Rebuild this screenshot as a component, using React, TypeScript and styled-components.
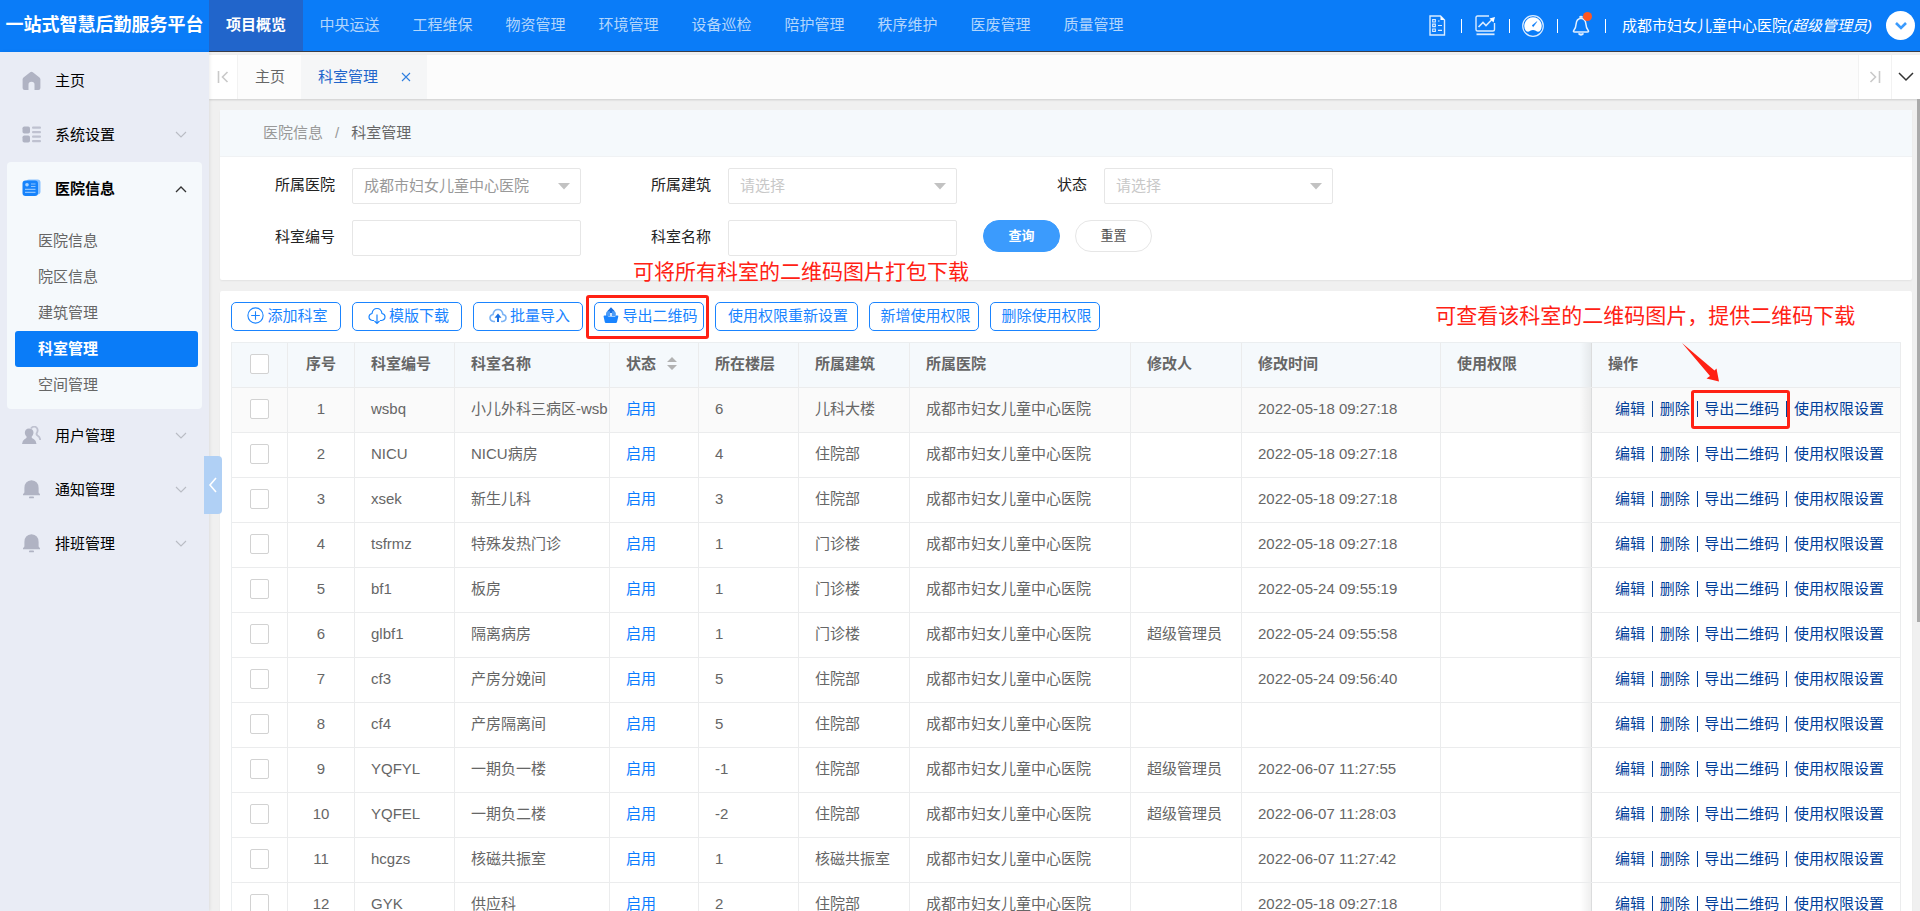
import React from 'react';
import styled, { createGlobalStyle, css } from 'styled-components';

const GlobalStyle = createGlobalStyle`
  *, *::before, *::after { box-sizing: border-box; }
  body {
    margin: 0;
    font: 15px/20px "Liberation Sans", "Noto Sans CJK SC", sans-serif;
    color: #666;
    background: #f0f0f0;
  }
  button, input, select { font: inherit; color: inherit; }
  a { color: inherit; text-decoration: none; }
  svg { display: block; flex: none; }
`;

const blue = '#0a7cf8';
const red = '#ff2114';

const Page = styled.div`
  height: 100vh;
  min-height: 600px;
  display: flex;
  flex-direction: column;
  overflow: hidden;
`;

/* ---------- top bar ---------- */

const TopBar = styled.header`
  flex: none;
  display: flex;
  height: 52px;
  background: ${blue};
  color: #fff;
`;

const Brand = styled.h1`
  flex: none;
  width: 209px;
  margin: 0;
  font-size: 18px;
  line-height: 50px;
  text-align: center;
  white-space: nowrap;
`;

const TopRest = styled.div`
  flex: 1;
  min-width: 0;
  display: flex;
  justify-content: space-between;
  border-bottom: 1px solid #393d49;
`;

const MainNav = styled.nav`
  display: flex;
`;

const NavLink = styled.a<{ $active?: boolean }>`
  width: 93px;
  line-height: 49px;
  text-align: center;
  white-space: nowrap;
  color: rgba(255, 255, 255, 0.7);
  ${p => p.$active && css`
    width: 94px;
    background: #2165cb;
    color: #fff;
    font-weight: 700;
  `}
`;

const Tools = styled.div`
  display: flex;
  align-items: center;
  padding-right: 5px;
`;

const ToolButton = styled.button`
  position: relative;
  display: flex;
  justify-content: center;
  width: 47px;
  padding: 0;
  border: 0;
  background: none;
`;

const ToolSeparator = styled.i`
  width: 1px;
  height: 14px;
  background: #fff;
`;

const AlertDot = styled.i`
  position: absolute;
  top: -3px;
  right: 13px;
  width: 9px;
  height: 9px;
  border-radius: 50%;
  background: #ff5722;
`;

const Account = styled.span`
  margin: 0 14px 0 16px;
  white-space: nowrap;
`;

const AccountMenu = styled.button`
  display: grid;
  place-items: center;
  width: 29px;
  height: 29px;
  padding: 0;
  border: 0;
  border-radius: 50%;
  background: #fff;
`;

/* ---------- side menu ---------- */

const Body = styled.div`
  flex: 1;
  min-height: 0;
  display: flex;
`;

const Side = styled.aside`
  position: relative;
  z-index: 2;
  flex: none;
  width: 209px;
  padding: 2px 7px 0;
  background: #e9ecf5;
  box-shadow: 1px 0 3px rgba(0, 0, 0, 0.08);
  color: #000;
`;

const MenuItem = styled.a<{ $bold?: boolean }>`
  display: flex;
  align-items: center;
  gap: 14px;
  height: 54px;
  padding: 0 15px;
  font-weight: ${p => (p.$bold ? 700 : 400)};
  & > span { flex: 1; }
`;

const MenuGroup = styled.div`
  padding-bottom: 6px;
  border-radius: 4px;
  background: #f5f9fc;
`;

const SubMenu = styled.div`
  padding: 7px 4px 0 8px;
`;

const SubItem = styled.a<{ $active?: boolean }>`
  display: block;
  padding-left: 23px;
  border-radius: 3px;
  line-height: 36px;
  color: #666;
  ${p => p.$active && css`
    background: ${blue};
    color: #fff;
    font-weight: 700;
  `}
`;

const CollapseHandle = styled.button`
  position: absolute;
  top: 404px;
  right: -13px;
  display: grid;
  place-items: center;
  width: 18px;
  height: 58px;
  padding: 0;
  border: 0;
  border-radius: 0 4px 4px 0;
  background: #b0d0f5;
`;

/* ---------- page tabs ---------- */

const Main = styled.main`
  position: relative;
  flex: 1;
  min-width: 0;
  display: flex;
  flex-direction: column;
`;

const TabBar = styled.div`
  flex: none;
  display: flex;
  height: 44px;
  margin-top: 3px;
  background: #fcfcfc;
  box-shadow: 0 1px 2px rgba(0, 0, 0, 0.15);
`;

const TabControl = styled.button<{ $width: number }>`
  display: grid;
  place-items: center;
  width: ${p => p.$width}px;
  padding: 0;
  border: 0;
  border-right: 1px solid #f2f2f2;
  background: #fff;
  & + & { border-right: 0; }
`;

const Tab = styled.a<{ $active?: boolean }>`
  display: flex;
  align-items: center;
  gap: 23px;
  padding: 0 16px 0 17px;
  ${p => p.$active && css`
    background: #f5f6f7;
    color: #2165cb;
  `}
`;

const TabSpace = styled.div`
  flex: 1;
  border-right: 1px solid #f2f2f2;
`;

/* ---------- cards ---------- */

const Content = styled.div`
  flex: 1;
  min-height: 0;
  overflow: hidden;
  display: flex;
  flex-direction: column;
  gap: 11px;
  padding: 11px 8px 0 11px;
`;

const ScrollThumb = styled.i`
  position: absolute;
  top: 47px;
  right: 0;
  width: 3px;
  height: 523px;
  background: #aaa;
`;

const Card = styled.section`
  flex: none;
  border-radius: 2px;
  background: #fff;
  box-shadow: 0 1px 2px rgba(0, 0, 0, 0.06);
`;

const Crumbs = styled.nav`
  display: flex;
  gap: 12px;
  height: 47px;
  padding-left: 43px;
  border-bottom: 1px solid #f0f2f4;
  background: #f5f9fc;
  line-height: 45px;
  color: #999;
  & > b { font-weight: 400; color: #666; }
`;

const FilterForm = styled.form`
  display: grid;
  grid-template-columns: repeat(3, 361px);
  gap: 16px 15px;
  padding: 11px 0 24px;
`;

const Field = styled.div`
  position: relative;
  display: flex;
  & > label {
    width: 132px;
    padding-right: 17px;
    text-align: right;
    line-height: 34px;
    color: #222;
  }
  & > svg {
    position: absolute;
    right: 11px;
    top: 15px;
    pointer-events: none;
  }
`;

const fieldBox = css`
  flex: 1;
  min-width: 0;
  height: 36px;
  padding: 0 11px;
  border: 1px solid #e6e6e6;
  border-radius: 2px;
  background: #fff;
  outline: 0;
`;

const TextInput = styled.input`${fieldBox}`;

const Select = styled.select<{ $empty?: boolean }>`
  ${fieldBox}
  appearance: none;
  opacity: 1;
  color: ${p => (p.$empty ? '#c8c8c8' : '#999')};
`;

const FormActions = styled.div`
  display: flex;
  gap: 15px;
  padding-left: 11px;
`;

const PillButton = styled.button<{ $primary?: boolean }>`
  width: 77px;
  height: 32px;
  padding: 0;
  border: 1px solid ${p => (p.$primary ? '#3b9bfd' : '#e6e6e6')};
  border-radius: 16px;
  background: ${p => (p.$primary ? '#3b9bfd' : '#fff')};
  color: ${p => (p.$primary ? '#fff' : '#555')};
  font-size: 13px;
  font-weight: ${p => (p.$primary ? 700 : 400)};
`;

const ListCard = styled(Card)`
  padding: 11px;
`;

const Toolbar = styled.div`
  display: flex;
  gap: 11px;
  margin-bottom: 11px;
`;

const ToolbarButton = styled.button<{ $wide?: boolean }>`
  position: relative;
  display: flex;
  align-items: center;
  justify-content: center;
  gap: 3px;
  width: ${p => (p.$wide ? 143 : 110)}px;
  height: 29px;
  padding: 0 0 2px 3px;
  border: 1px solid #1a84ff;
  border-radius: 5px;
  background: #fff;
  color: #1a84ff;
  white-space: nowrap;
`;

/* ---------- table ---------- */

const Table = styled.table`
  width: 100%;
  table-layout: fixed;
  border-collapse: separate;
  border-spacing: 0;
  border: solid #ebeef0;
  border-width: 1px 0 0 1px;

  th, td {
    height: 45px;
    padding: 0 16px 2px;
    border: solid #ebeced;
    border-width: 0 1px 1px 0;
    text-align: left;
    white-space: nowrap;
    overflow: hidden;
  }
  th { background: #f5f9fc; }
  .center { padding: 0 0 2px; text-align: center; }
  .fixed { position: relative; overflow: visible; }
  .fixed::before {
    content: '';
    position: absolute;
    top: 0;
    bottom: 0;
    left: -12px;
    width: 12px;
    background: linear-gradient(to left, rgba(0, 0, 0, 0.07), rgba(0, 0, 0, 0));
  }
`;

const Row = styled.tr<{ $hover?: boolean }>`
  background: ${p => (p.$hover ? '#fafafa' : '#fff')};
`;

const CheckBox = styled.input`
  appearance: none;
  display: block;
  width: 19px;
  height: 20px;
  margin: 0 auto;
  border: 1px solid #d2d2d2;
  border-radius: 2px;
  background: #fff;
`;

const SortLabel = styled.span`
  display: flex;
  align-items: center;
  gap: 11px;
`;

const StatusLink = styled.a`
  color: #0a7cff;
`;

const RowActions = styled.div`
  display: flex;
  align-items: center;
  gap: 7px;
  padding-left: 7px;
  color: #014099;
  & > a { position: relative; }
  & > i { width: 1px; height: 16px; background: #014099; }
`;

/* ---------- annotations ---------- */

const ButtonFrame = styled.span`
  position: absolute;
  inset: -8px -6px -9px -9px;
  border: 3px solid ${red};
  border-radius: 3px;
`;

const LinkFrame = styled.span`
  position: absolute;
  inset: -9px -11px -10px -13px;
  border: 3px solid ${red};
  border-radius: 3px;
`;

const ButtonNote = styled.span`
  position: absolute;
  left: 38px;
  bottom: 43px;
  font-size: 21px;
  line-height: 30px;
  color: ${red};
`;

const LinkNote = styled.span`
  position: absolute;
  right: -76px;
  bottom: 88px;
  font-size: 21px;
  line-height: 30px;
  color: ${red};
`;

const NoteArrow = styled.svg`
  position: absolute;
  left: -23px;
  bottom: 37px;
`;

/* ---------- icons ---------- */

const Chevron = ({ d, w, h, color, sw = 1 }: { d: string; w: number; h: number; color: string; sw?: number }) => (
  <svg width={w} height={h} viewBox={`0 0 ${w} ${h}`} fill="none" stroke={color} strokeWidth={sw}><path d={d} /></svg>
);

const MenuChevron = ({ open }: { open?: boolean }) =>
  open
    ? <Chevron w={12} h={8} d="M1 7L6 2L11 7" color="#333" sw={1.3} />
    : <Chevron w={12} h={8} d="M1 1L6 6L11 1" color="#b9bcc4" sw={1.1} />;

const HomeIcon = () => (
  <svg width="19" height="20" viewBox="0 0 19 20" fill="#b0b3c3">
    <path d="M8.2 1.2Q9.5.2 10.8 1.2L17.5 6.4Q18.4 7.200 18.400 8.300V17Q18.400 19 16.400 19H12.500V13.500Q12.500 10.800 9.500 10.800T6.500 13.500V19H2.600Q.6 19 .6 17V8.300Q.6 7.200 1.500 6.400Z" />
  </svg>
);

const GridIcon = () => (
  <svg width="19" height="18" viewBox="0 0 19 18" fill="#b0b3c3">
    <rect x="0.500" y="0.500" width="7.500" height="7" rx="1.800" />
    <rect x="0.500" y="9.500" width="7.500" height="7" rx="1.800" />
    <rect x="10" y="0.500" width="9" height="2.200" rx="1" opacity=".75" />
    <rect x="10" y="5" width="9" height="2.200" rx="1" opacity=".75" />
    <rect x="10" y="9.500" width="9" height="2.200" rx="1" opacity=".75" />
    <rect x="10" y="14" width="9" height="2.200" rx="1" opacity=".75" />
  </svg>
);

const HospitalIcon = () => (
  <svg width="19" height="20" viewBox="0 0 19 20">
    <rect x="4" y="0.500" width="14.500" height="15" rx="3" fill="#8cc3ff" />
    <rect x="0.500" y="1.500" width="15.500" height="15.500" rx="3" fill="#1783fb" />
    <circle cx="5" cy="5.800" r="1.800" fill="#a9d3ff" />
    <path d="M9 5H13.500M9 7.500H13.500M3 10.300H13.500M3 13.300H13.500" stroke="#8cc3ff" strokeWidth="1.200" />
  </svg>
);

const UsersIcon = () => (
  <svg width="19" height="20" viewBox="0 0 19 20">
    <path d="M9 2.500Q11 -.2 13.800 1Q16.800 3 15 6.500Q13.800 8.200 15.500 9.500Q18 11 18.200 14" fill="none" stroke="#b0b3c3" strokeWidth="1.800" opacity=".75" />
    <path d="M7 2.500Q11.500 2.500 11.500 7Q11.200 9.500 9.500 11Q9.800 12.500 12 13.300Q14.500 15 14.500 18H0Q0 15 2.500 13.300Q4.500 12.500 4.800 11Q3 9.500 2.800 7Q3 2.500 7 2.500Z" fill="#b0b3c3" />
  </svg>
);

const MenuBellIcon = () => (
  <svg width="19" height="20" viewBox="0 0 19 20" fill="#b0b3c3">
    <path d="M9.500 .3Q16.500.8 16.600 8V12.500L18 14.300V15.300H1V14.300L2.400 12.500V8Q2.500.8 9.500.3Z" />
    <rect x="7" y="16.500" width="5" height="1.800" rx=".9" />
  </svg>
);

const ChecklistIcon = () => (
  <svg width="17" height="21" viewBox="0 0 17 21" fill="none" stroke="#d9ebff" strokeWidth="1.400">
    <path d="M11.500 1H1V20H15.500V5Z" />
    <path d="M3.700 4.500H6.300V7H3.700ZM3.700 9.200H6.300V11.700H3.700ZM3.700 14H6.300V16.500H3.700ZM9 6H10.500M9 10.500H13M9 15.300H13" strokeWidth="1.200" />
    <path d="M11.500 1V5H15.500Z" fill="#fff" stroke="none" />
  </svg>
);

const ChartIcon = () => (
  <svg width="21" height="21" viewBox="0 0 21 21" fill="none" stroke="#d9ebff" strokeWidth="1.400">
    <path d="M14 1H2.500Q1 1 1 2.500V14.500Q1 16 2.500 16H18Q19.500 16 19.500 14.500V8" />
    <path d="M3.500 12L8 7.500L11 10.500L17 4.500" strokeWidth="1.600" />
    <path d="M14.500 3.500L20 2L18.500 7.500Z" fill="#fff" stroke="none" />
    <path d="M1.500 19.300H19.500" strokeWidth="1.800" />
  </svg>
);

const GaugeIcon = () => (
  <svg width="22" height="22" viewBox="0 0 22 22">
    <circle cx="11" cy="11" r="10.300" fill="none" stroke="#d9ebff" strokeWidth="1.200" />
    <path d="M11 2.200A8.700 8.700 0 0 1 18 16Q16 17.500 13.800 15.800Q11 14 8.200 15.800Q6 17.500 4 16A8.700 8.700 0 0 1 11 2.200Z" fill="#fff" />
    <path d="M15 6.500L10 10.600L11.300 11.800Z" fill="#0a7cf8" stroke="#0a7cf8" strokeWidth=".4" />
  </svg>
);

const BellIcon = () => (
  <svg width="18" height="21" viewBox="0 0 18 21" fill="none" stroke="#e3f0ff" strokeWidth="1.500">
    <path d="M9 3.200Q13.500 3.800 13.800 8.500Q14 13 16.500 16Q16.800 17 15.500 17H2.500Q1.200 17 1.500 16Q4 13 4.200 8.500Q4.500 3.800 9 3.200Z" />
    <path d="M7.500 2.500Q9 .5 10.500 2.500M6.500 18.500Q9 21.500 11.500 18.500" fill="#fff" />
  </svg>
);

const Caret = () => <svg width="12" height="7" viewBox="0 0 12 7" fill="#c2c2c2"><path d="M0 0H12L6 6.500Z" /></svg>;

const SortIcon = () => (
  <svg width="10" height="16" viewBox="0 0 10 16" fill="#b2b2b2"><path d="M0 6L5 1L10 6ZM0 9H10L5 14Z" /></svg>
);

const AddIcon = () => (
  <svg width="17" height="17" viewBox="0 0 17 17" fill="none" stroke="#1a84ff" strokeWidth="1.100">
    <circle cx="8.500" cy="8.500" r="7.600" /><path d="M8.500 4.200V12.800M4.200 8.500H12.800" />
  </svg>
);

const cloud = 'M6 13.500H4.500Q1 13 1 9.800Q1.200 7 4 6.500Q4.800 1.500 9 1.500T14 6.500Q17 7 17 9.800Q17 13 13.500 13.500H12';

const CloudDownIcon = () => (
  <svg width="18" height="18" viewBox="0 0 18 18" fill="none" stroke="#1a84ff" strokeWidth="1.200">
    <path d={cloud} /><path d="M9 7.500V16.500M6.500 14L9 16.500L11.500 14" />
  </svg>
);

const CloudUpIcon = () => (
  <svg width="18" height="16" viewBox="0 0 18 16" fill="none" stroke="#7bb3f5" strokeWidth="1.600">
    <path d={cloud} /><path d="M9 14V8" stroke="#1a6fe0" strokeWidth="2" /><path d="M5.500 9.800L9 5.500L12.500 9.800Z" fill="#1a6fe0" stroke="none" />
  </svg>
);

const ExportIcon = () => (
  <svg width="16" height="17" viewBox="0 0 16 17">
    <path d="M3 9.500V6.500Q3 3.500 8 3.200Q12.800 3.500 12.800 6.500V9.500Z" fill="#4d9cf7" />
    <path d="M8 .3L11.800 4.200H9V9H7V4.200H4.200Z" fill="#1a6fe0" />
    <path d="M7 6H9V9H7Z" fill="#cfe4ff" />
    <path d="M1.500 8.500H4Q5 10 8 10H12L13 8.500H14.500Q15.500 8.500 15.300 9.500L14 15Q13.800 16 12.800 16H3Q2 16 1.800 15L.6 9.500Q.5 8.500 1.500 8.500Z" fill="#1a84ff" />
  </svg>
);

/* ---------- data ---------- */

const navItems = ['项目概览', '中央运送', '工程维保', '物资管理', '环境管理', '设备巡检', '陪护管理', '秩序维护', '医废管理', '质量管理'];
const subItems = ['医院信息', '院区信息', '建筑管理', '科室管理', '空间管理'];
const hospital = '成都市妇女儿童中心医院';
const columnWidths = [56, 67, 100, 155, 89, 100, 111, 221, 111, 199, 0, 309];

const rows = [
  ['wsbq', '小儿外科三病区-wsb', '6', '儿科大楼', '', '2022-05-18 09:27:18'],
  ['NICU', 'NICU病房', '4', '住院部', '', '2022-05-18 09:27:18'],
  ['xsek', '新生儿科', '3', '住院部', '', '2022-05-18 09:27:18'],
  ['tsfrmz', '特殊发热门诊', '1', '门诊楼', '', '2022-05-18 09:27:18'],
  ['bf1', '板房', '1', '门诊楼', '', '2022-05-24 09:55:19'],
  ['glbf1', '隔离病房', '1', '门诊楼', '超级管理员', '2022-05-24 09:55:58'],
  ['cf3', '产房分娩间', '5', '住院部', '', '2022-05-24 09:56:40'],
  ['cf4', '产房隔离间', '5', '住院部', '', ''],
  ['YQFYL', '一期负一楼', '-1', '住院部', '超级管理员', '2022-06-07 11:27:55'],
  ['YQFEL', '一期负二楼', '-2', '住院部', '超级管理员', '2022-06-07 11:28:03'],
  ['hcgzs', '核磁共振室', '1', '核磁共振室', '', '2022-06-07 11:27:42'],
  ['GYK', '供应科', '2', '住院部', '', '2022-05-18 09:27:18'],
];

export default function App() {
  return (
    <Page>
      <GlobalStyle />
      <TopBar>
        <Brand>一站式智慧后勤服务平台</Brand>
        <TopRest>
          <MainNav>
            {navItems.map((t, i) => <NavLink key={t} href="#" $active={i === 0}>{t}</NavLink>)}
          </MainNav>
          <Tools>
            <ToolButton aria-label="清单"><ChecklistIcon /></ToolButton>
            <ToolSeparator />
            <ToolButton aria-label="统计"><ChartIcon /></ToolButton>
            <ToolSeparator />
            <ToolButton aria-label="仪表盘"><GaugeIcon /></ToolButton>
            <ToolSeparator />
            <ToolButton aria-label="消息"><BellIcon /><AlertDot /></ToolButton>
            <ToolSeparator />
            <Account>{hospital}<em>(超级管理员)</em></Account>
            <AccountMenu aria-label="账户菜单">
              <Chevron w={14} h={10} d="M2 2L7 7L12 2" color="#3b9bfd" sw={2.6} />
            </AccountMenu>
          </Tools>
        </TopRest>
      </TopBar>

      <Body>
        <Side>
          <MenuItem href="#"><HomeIcon /><span>主页</span></MenuItem>
          <MenuItem href="#"><GridIcon /><span>系统设置</span><MenuChevron /></MenuItem>
          <MenuGroup>
            <MenuItem href="#" $bold><HospitalIcon /><span>医院信息</span><MenuChevron open /></MenuItem>
            <SubMenu>
              {subItems.map(t => <SubItem key={t} href="#" $active={t === '科室管理'}>{t}</SubItem>)}
            </SubMenu>
          </MenuGroup>
          <MenuItem href="#"><UsersIcon /><span>用户管理</span><MenuChevron /></MenuItem>
          <MenuItem href="#"><MenuBellIcon /><span>通知管理</span><MenuChevron /></MenuItem>
          <MenuItem href="#"><MenuBellIcon /><span>排班管理</span><MenuChevron /></MenuItem>
          <CollapseHandle aria-label="收起菜单">
            <Chevron w={10} h={16} d="M8 1L2 8L8 15" color="#fff" sw={1.6} />
          </CollapseHandle>
        </Side>

        <Main>
          <TabBar>
            <TabControl $width={29} aria-label="向左滚动">
              <Chevron w={12} h={12} d="M1.500 0V12M10.500 1L5.500 6L10.500 11" color="#c9c9c9" sw={1.6} />
            </TabControl>
            <Tab href="#">主页</Tab>
            <Tab href="#" $active>
              科室管理
              <Chevron w={10} h={10} d="M1 1L9 9M9 1L1 9" color="#2f7fe0" sw={1.1} />
            </Tab>
            <TabSpace />
            <TabControl $width={33} aria-label="向右滚动">
              <Chevron w={12} h={12} d="M10.500 0V12M1.500 1L6.500 6L1.500 11" color="#c9c9c9" sw={1.6} />
            </TabControl>
            <TabControl $width={28} aria-label="页签菜单">
              <Chevron w={16} h={10} d="M1 1L8 8L15 1" color="#333" sw={1.5} />
            </TabControl>
          </TabBar>

          <Content>
            <Card>
              <Crumbs><a href="#">医院信息</a><span>/</span><b>科室管理</b></Crumbs>
              <FilterForm onSubmit={e => e.preventDefault()}>
                <Field>
                  <label htmlFor="hospital">所属医院</label>
                  <Select id="hospital" disabled><option>{hospital}</option></Select>
                  <Caret />
                </Field>
                <Field>
                  <label htmlFor="building">所属建筑</label>
                  <Select id="building" $empty><option>请选择</option></Select>
                  <Caret />
                </Field>
                <Field>
                  <label htmlFor="status">状态</label>
                  <Select id="status" $empty><option>请选择</option></Select>
                  <Caret />
                </Field>
                <Field><label htmlFor="code">科室编号</label><TextInput id="code" /></Field>
                <Field><label htmlFor="name">科室名称</label><TextInput id="name" /></Field>
                <FormActions>
                  <PillButton type="submit" $primary>查询</PillButton>
                  <PillButton type="reset">重置</PillButton>
                </FormActions>
              </FilterForm>
            </Card>

            <ListCard>
              <Toolbar>
                <ToolbarButton><AddIcon />添加科室</ToolbarButton>
                <ToolbarButton><CloudDownIcon />模版下载</ToolbarButton>
                <ToolbarButton><CloudUpIcon />批量导入</ToolbarButton>
                <ToolbarButton>
                  <ExportIcon />导出二维码
                  <ButtonFrame />
                  <ButtonNote>可将所有科室的二维码图片打包下载</ButtonNote>
                </ToolbarButton>
                <ToolbarButton $wide>使用权限重新设置</ToolbarButton>
                <ToolbarButton>新增使用权限</ToolbarButton>
                <ToolbarButton>删除使用权限</ToolbarButton>
              </Toolbar>

              <Table>
                <colgroup>
                  {columnWidths.map((w, i) => <col key={i} style={w ? { width: w } : undefined} />)}
                </colgroup>
                <thead>
                  <tr>
                    <th className="center"><CheckBox type="checkbox" aria-label="全选" /></th>
                    <th className="center">序号</th>
                    <th>科室编号</th>
                    <th>科室名称</th>
                    <th><SortLabel>状态<SortIcon /></SortLabel></th>
                    <th>所在楼层</th>
                    <th>所属建筑</th>
                    <th>所属医院</th>
                    <th>修改人</th>
                    <th>修改时间</th>
                    <th>使用权限</th>
                    <th className="fixed">操作</th>
                  </tr>
                </thead>
                <tbody>
                  {rows.map(([code, name, floor, building, editor, time], i) => (
                    <Row key={code} $hover={i === 0}>
                      <td className="center"><CheckBox type="checkbox" aria-label={`选择 ${name}`} /></td>
                      <td className="center">{i + 1}</td>
                      <td>{code}</td>
                      <td>{name}</td>
                      <td><StatusLink href="#">启用</StatusLink></td>
                      <td>{floor}</td>
                      <td>{building}</td>
                      <td>{hospital}</td>
                      <td>{editor}</td>
                      <td>{time}</td>
                      <td />
                      <td className="fixed">
                        <RowActions>
                          <a href="#">编辑</a><i />
                          <a href="#">删除</a><i />
                          <a href="#">
                            导出二维码
                            {i === 0 && (
                              <>
                                <LinkFrame />
                                <LinkNote>可查看该科室的二维码图片，提供二维码下载</LinkNote>
                                <NoteArrow width="40" height="40" viewBox="0 0 40 40" fill={red}>
                                  <path d="M1 1L33.500 28.500L35.500 26.500L38 39.500L25.500 36.500L29 34Z" />
                                </NoteArrow>
                              </>
                            )}
                          </a><i />
                          <a href="#">使用权限设置</a>
                        </RowActions>
                      </td>
                    </Row>
                  ))}
                </tbody>
              </Table>
            </ListCard>
          </Content>
          <ScrollThumb />
        </Main>
      </Body>
    </Page>
  );
}
